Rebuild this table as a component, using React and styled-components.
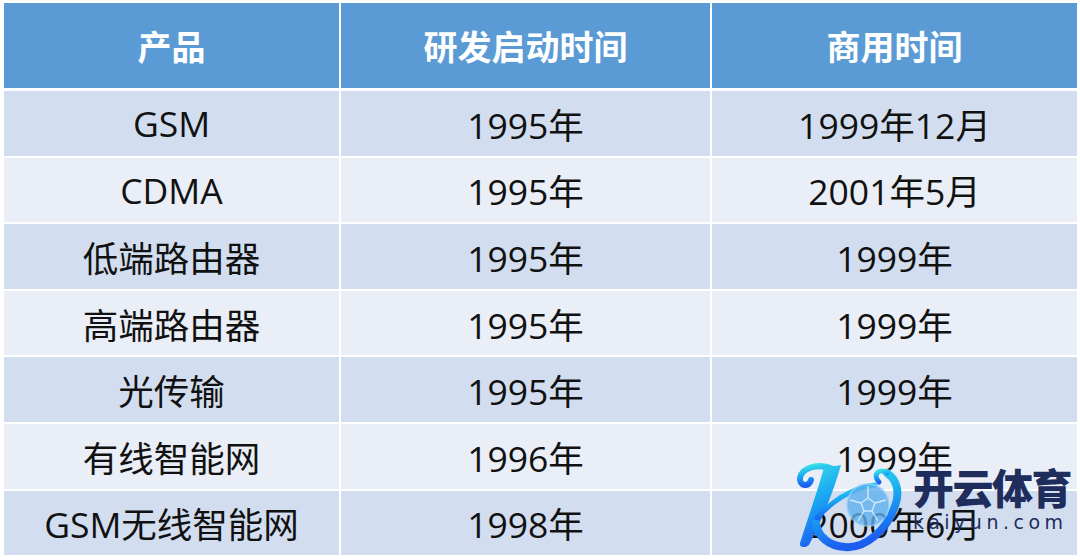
import React from "react";
import styled, { createGlobalStyle } from "styled-components";

const GlobalStyle = createGlobalStyle`
  html, body { margin: 0; padding: 0; background: #fff; }
  body { font-family: "Open Sans", "Noto Sans CJK SC", sans-serif; }
`;

const Page = styled.div`
  position: relative;
  width: 1080px;
  height: 560px;
  padding: 3px 0 0 4px;
  box-sizing: border-box;
  overflow: hidden;
`;

const Grid = styled.div`
  display: grid;
  grid-template-columns: 335px 369px 365px;
  grid-template-rows: 86px repeat(7, 64.6px);
  column-gap: 2px;
  row-gap: 2px;
`;

const HeadCell = styled.div`
  background: #5b9bd5;
  color: #fff;
  font-family: "Noto Sans CJK SC", sans-serif;
  font-weight: 700;
  font-size: 34px;
  display: flex;
  align-items: center;
  justify-content: center;
  margin-bottom: 1px;
`;

const Cell = styled.div`
  background: ${(p) => (p.$alt ? "#e9eef7" : "#d2deef")};
  color: #111;
  font-size: 35.5px;
  display: flex;
  align-items: center;
  justify-content: center;
  white-space: nowrap;
`;

const Mark = styled.div`
  position: absolute;
  left: 795px;
  top: 460px;
  display: flex;
  align-items: flex-start;
  gap: 6px;
  pointer-events: none;
`;

const MarkText = styled.div`
  display: flex;
  flex-direction: column;
  padding-top: 2px;
  color: #1e2d5c;
`;

const MarkName = styled.span`
  font-family: "Noto Sans CJK SC", sans-serif;
  font-weight: 900;
  font-size: 41px;
  line-height: 48px;
  letter-spacing: -1.5px;
`;

const MarkUrl = styled.span`
  font-family: "DejaVu Sans", sans-serif;
  font-size: 19px;
  line-height: 20px;
  letter-spacing: 4.5px;
  margin-top: 2px;
`;

const rows = [
  ["GSM", "1995年", "1999年12月"],
  ["CDMA", "1995年", "2001年5月"],
  ["低端路由器", "1995年", "1999年"],
  ["高端路由器", "1995年", "1999年"],
  ["光传输", "1995年", "1999年"],
  ["有线智能网", "1996年", "1999年"],
  ["GSM无线智能网", "1998年", "2000年6月"],
];

function Logo() {
  return (
    <svg width="112" height="92" viewBox="0 0 112 92">
      <defs>
        <linearGradient id="kg" x1="0" y1="0" x2="0.3" y2="1">
          <stop offset="0" stopColor="#3ae3e6" />
          <stop offset="0.5" stopColor="#19a8f2" />
          <stop offset="1" stopColor="#1c5ff0" />
        </linearGradient>
      </defs>
      <path d="M38 9 C24 3, 7 7, 5 18 C4 26, 14 28, 16 20" fill="none" stroke="url(#kg)" strokeWidth="6" strokeLinecap="round" />
      <path d="M29 8 L46 5 C39 30, 27 60, 14 85 C11 88, 4 88, 5 83 C13 58, 22 32, 29 8 Z" fill="url(#kg)" />
      <path d="M22 58 C38 40, 58 28, 80 25" fill="none" stroke="url(#kg)" strokeWidth="5" strokeLinecap="round" />
      <path d="M92 13 C102 20, 105 32, 100 46 C92 70, 70 89, 50 87 C33 86, 23 76, 21 64" fill="none" stroke="url(#kg)" strokeWidth="8" strokeLinecap="round" />
      <path d="M92 13 C84 7, 77 15, 84 22" fill="none" stroke="url(#kg)" strokeWidth="5" strokeLinecap="round" />
      <circle cx="73" cy="45" r="21" fill="#5fb0ee" opacity="0.8" stroke="#8fd0ff" strokeWidth="1.5" />
      <g fill="none" stroke="#d8f0ff" strokeWidth="1.4" opacity="0.9">
        <polygon points="73,38 80,43 77,51 69,51 66,43" />
        <path d="M73 38 L73 26 M80 43 L91 40 M77 51 L83 61 M69 51 L63 61 M66 43 L55 40" />
      </g>
    </svg>
  );
}

export default function App() {
  return (
    <>
      <GlobalStyle />
      <Page>
        <Grid>
          <HeadCell>产品</HeadCell>
          <HeadCell>研发启动时间</HeadCell>
          <HeadCell>商用时间</HeadCell>
          {rows.map((r, i) =>
            r.map((c, j) => (
              <Cell key={`${i}-${j}`} $alt={i % 2 === 1}>
                {c}
              </Cell>
            ))
          )}
        </Grid>
        <Mark>
          <Logo />
          <MarkText>
            <MarkName>开云体育</MarkName>
            <MarkUrl>kaiyun.com</MarkUrl>
          </MarkText>
        </Mark>
      </Page>
    </>
  );
}
